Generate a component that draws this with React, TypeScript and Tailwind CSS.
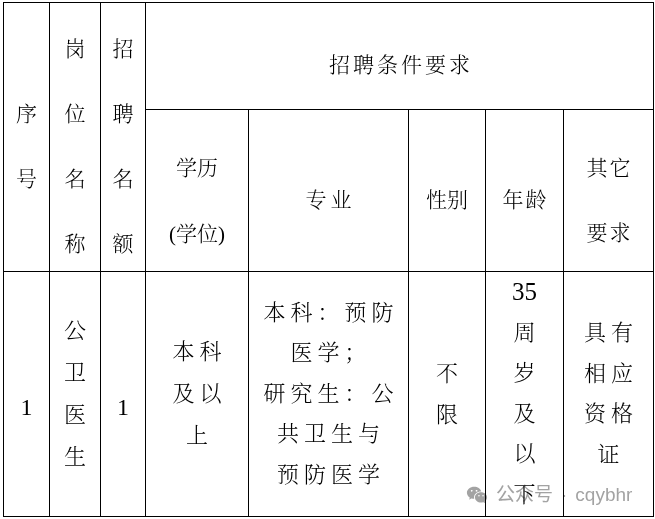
import { RiWechatFill } from 'react-icons/ri'

const cell = 'flex flex-col items-center justify-center bg-white text-center'

function Lines({ items, className }: { items: string[]; className: string }) {
  return (
    <>
      {items.map((t, i) => (
        <span key={i} className={className}>
          {t}
        </span>
      ))}
    </>
  )
}

export default function App() {
  return (
    <div className="relative h-[519px] w-[655px] overflow-hidden bg-white pl-[3px] pt-[2px] font-[family-name:'Liberation_Serif','Noto_Serif_CJK_SC','Noto_Sans_CJK_SC',serif] text-[21px] font-light text-black">
      <div className="grid w-[651px] grid-cols-[45px_50px_44px_102px_159px_76px_77px_89px] grid-rows-[106px_161px_244px] gap-px bg-black p-px">
        {/* header, left columns span both header rows */}
        <div className={`${cell} row-span-2 pt-[20px]`}>
          <Lines items={['序', '号']} className="leading-[65px]" />
        </div>
        <div className={`${cell} row-span-2 pt-[20px]`}>
          <Lines items={['岗', '位', '名', '称']} className="leading-[65px]" />
        </div>
        <div className={`${cell} row-span-2 pt-[20px]`}>
          <Lines items={['招', '聘', '名', '额']} className="leading-[65px]" />
        </div>
        <div className={`${cell} col-span-5 pt-[20px] pl-[3px] tracking-[3px]`}>招聘条件要求</div>

        <div className={`${cell} pt-[20px]`}>
          <span className="leading-[66px]">学历</span>
          <span className="leading-[66px]">(学位)</span>
        </div>
        <div className={`${cell} pt-[20px] pl-[4px] tracking-[4px]`}>专业</div>
        <div className={`${cell} pt-[20px]`}>性别</div>
        <div className={`${cell} pt-[20px] pl-[2px] tracking-[2px]`}>年龄</div>
        <div className={`${cell} pt-[20px] pl-[2px] tracking-[2px]`}>
          <span className="leading-[65px]">其它</span>
          <span className="leading-[65px]">要求</span>
        </div>

        {/* body row */}
        <div className={`${cell} pt-[26px] text-[24px] font-normal`}>1</div>
        <div className={`${cell} text-[22px]`}>
          <Lines items={['公', '卫', '医', '生']} className="leading-[42px]" />
        </div>
        <div className={`${cell} pt-[26px] text-[24px] font-normal`}>1</div>
        <div className={`${cell} pl-[5px] text-[22px] tracking-[5px]`}>
          <Lines items={['本科', '及以', '上']} className="leading-[42px]" />
        </div>
        <div className={`${cell} pl-[5px] text-[22px] tracking-[5px]`}>
          <Lines
            items={['本科：预防', '医学；', '研究生：公', '共卫生与', '预防医学']}
            className="leading-[40.5px]"
          />
        </div>
        <div className={`${cell} text-[22px]`}>
          <Lines items={['不', '限']} className="leading-[41px]" />
        </div>
        <div className="flex flex-col items-center bg-white text-center text-[22px]">
          <span className="text-[25px] font-normal leading-[40.5px]">35</span>
          <Lines items={['周', '岁', '及', '以', '下']} className="leading-[40.5px]" />
        </div>
        <div className={`${cell} pl-[5px] text-[22px] tracking-[5px]`}>
          <Lines items={['具有', '相应', '资格', '证']} className="leading-[40.5px]" />
        </div>
      </div>

      {/* watermark */}
      <div className="absolute left-[466px] top-[481px] flex items-center gap-[8px] font-[family-name:'Liberation_Sans','Noto_Sans_CJK_SC',sans-serif] text-[19px] font-normal text-[#a3a3a3] mix-blend-multiply">
        <RiWechatFill className="h-[22px] w-[22px]" />
        <span>公众号</span>
        <span>·</span>
        <span>cqybhr</span>
      </div>
    </div>
  )
}
